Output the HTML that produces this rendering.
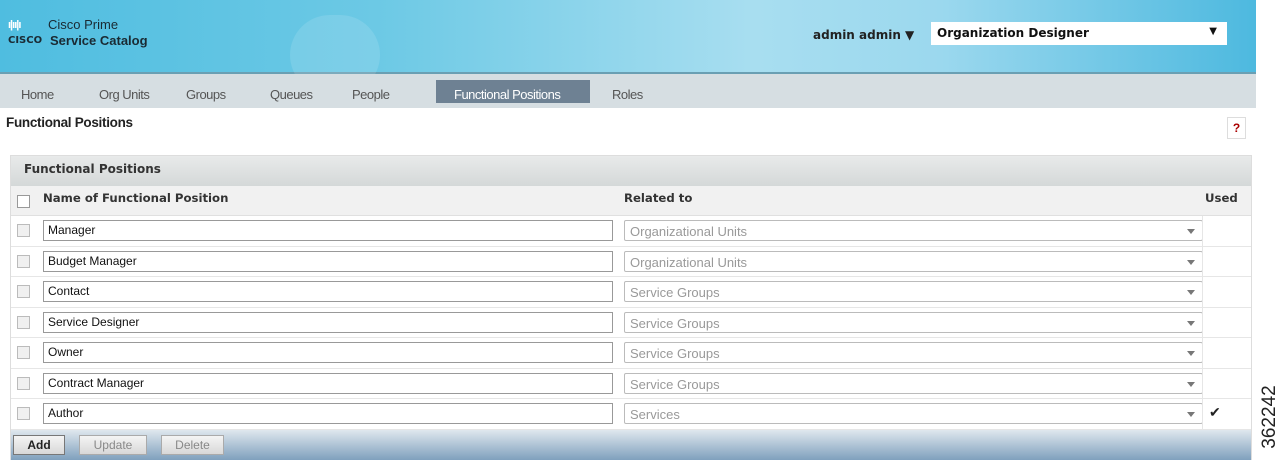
<!DOCTYPE html><html><head><style>
*{margin:0;padding:0;box-sizing:border-box}
body{width:1280px;height:460px;position:relative;background:#fff;font-family:"Liberation Sans",sans-serif;overflow:hidden}
.a{position:absolute}
.dj{font-family:"DejaVu Sans",sans-serif}
#hdr{left:0;top:0;width:1256px;height:74px;background:linear-gradient(90deg,#4fbde0 0%,#6cc9e5 30%,#a8def0 60%,#9bd8ee 75%,#4db9df 100%);border-bottom:2px solid #6a9fb3}
#nav{left:0;top:74px;width:1256px;height:34px;background:#d6dee2}
.tab{top:87px;font-size:13px;color:#555;letter-spacing:-0.5px}
.row{left:11px;width:1240px;background:#fff;border-bottom:1px solid #e6e6e6}
.cb{left:6px;top:8px;width:13px;height:13px;border:1px solid #bbb;background:#f0f0f0}
.in{left:32px;top:4px;width:570px;height:21px;border:1px solid #999;background:#fff;font-size:12px;padding:2px 4px;color:#111}
.sel{left:613px;top:4px;width:579px;height:21px;border:1px solid #bbb;border-radius:2px;background:#fff;font-size:13px;padding:3px 5px;color:#999}
.sel:after{content:"";position:absolute;right:7px;top:8px;border:4px solid transparent;border-top:5px solid #777}
.vl{left:1191px;top:0;width:1px;height:100%;background:#e6e6e6}
.btn{top:435px;height:20px;border:1px solid #aaa;background:linear-gradient(#f4f4f4,#d8d8d8);font-size:12px;color:#888;text-align:center;line-height:18px}
</style></head><body>
<div id="hdr" class="a"></div>
<div class="a" style="left:290px;top:15px;width:90px;height:80px;border-radius:45px;background:rgba(255,255,255,0.12)"></div>
<div class="a" style="left:8px;top:19px;font-size:11px;color:#fff;letter-spacing:-1px;font-weight:bold">ı|ıı|ı</div>
<div class="a" style="left:48px;top:17px;font-size:13px;color:#1a2a33">Cisco Prime</div>
<div class="a dj" style="left:8px;top:35px;font-size:10px;color:#1a2a33;font-weight:bold">CISCO</div>
<div class="a" style="left:50px;top:33px;font-size:13px;color:#1a2a33;font-weight:bold">Service Catalog</div>
<div class="a dj" style="left:813px;top:28px;font-size:12px;font-weight:bold;color:#222">admin admin ▼</div>
<div class="a dj" style="left:931px;top:22px;width:296px;height:23px;background:#fff;font-size:12px;font-weight:bold;color:#111;padding:4px 6px">Organization Designer<span style="position:absolute;right:10px;top:4px;font-size:10px">▼</span></div>
<div id="nav" class="a"></div>
<div class="a" style="left:436px;top:80px;width:154px;height:23px;background:#6e8193"></div>
<div class="a tab" style="left:21px">Home</div>
<div class="a tab" style="left:99px">Org Units</div>
<div class="a tab" style="left:186px">Groups</div>
<div class="a tab" style="left:270px">Queues</div>
<div class="a tab" style="left:352px">People</div>
<div class="a tab" style="left:454px;color:#fff">Functional Positions</div>
<div class="a tab" style="left:612px">Roles</div>
<div class="a" style="left:6px;top:115px;font-size:13.5px;font-weight:bold;color:#222;letter-spacing:-0.3px">Functional Positions</div>
<div class="a" style="left:1227px;top:117px;width:19px;height:22px;border:1px solid #ddd;color:#a00;font-size:12px;font-weight:bold;text-align:center;line-height:20px">?</div>
<div class="a" style="left:10px;top:155px;width:1242px;height:305px;border:1px solid #ddd;background:#f0f0f0"></div>
<div class="a" style="left:11px;top:156px;width:1240px;height:30px;background:linear-gradient(#e8eaea,#d4d8d8)"></div>
<div class="a dj" style="left:24px;top:162px;font-size:12px;font-weight:bold;color:#333">Functional Positions</div>
<div class="a" style="left:11px;top:186px;width:1240px;height:30px;background:#f1f1f1;border-bottom:1px solid #e0e0e0"></div>
<div class="a" style="left:17px;top:195px;width:13px;height:13px;border:1px solid #999;background:#fff"></div>
<div class="a dj" style="left:43px;top:191px;font-size:11.7px;font-weight:bold;color:#333">Name of Functional Position</div>
<div class="a dj" style="left:624px;top:191px;font-size:11.7px;font-weight:bold;color:#333">Related to</div>
<div class="a dj" style="left:1205px;top:191px;font-size:11.7px;font-weight:bold;color:#333">Used</div>

<div class="a row" style="top:216px;height:31px"><div class="a cb"></div><div class="a in">Manager</div><div class="a sel">Organizational Units</div><div class="a vl"></div></div>
<div class="a row" style="top:247px;height:30px"><div class="a cb"></div><div class="a in">Budget Manager</div><div class="a sel">Organizational Units</div><div class="a vl"></div></div>
<div class="a row" style="top:277px;height:31px"><div class="a cb"></div><div class="a in">Contact</div><div class="a sel">Service Groups</div><div class="a vl"></div></div>
<div class="a row" style="top:308px;height:30px"><div class="a cb"></div><div class="a in">Service Designer</div><div class="a sel">Service Groups</div><div class="a vl"></div></div>
<div class="a row" style="top:338px;height:31px"><div class="a cb"></div><div class="a in">Owner</div><div class="a sel">Service Groups</div><div class="a vl"></div></div>
<div class="a row" style="top:369px;height:30px"><div class="a cb"></div><div class="a in">Contract Manager</div><div class="a sel">Service Groups</div><div class="a vl"></div></div>
<div class="a row" style="top:399px;height:31px"><div class="a cb"></div><div class="a in">Author</div><div class="a sel">Services</div><div class="a vl"></div><div class="a" style="left:1198px;top:5px;font-size:14px;color:#222">✔</div></div>

<div class="a" style="left:11px;top:430px;width:1240px;height:30px;background:linear-gradient(#dfe7ee,#7fa0bd)"></div>
<div class="a btn" style="left:13px;width:52px;color:#222;font-weight:bold;border-color:#777">Add</div>
<div class="a btn" style="left:79px;width:68px">Update</div>
<div class="a btn" style="left:161px;width:63px">Delete</div>
<div class="a" style="left:1235px;top:406px;width:70px;font-size:19px;color:#222;transform:rotate(-90deg);transform-origin:center;text-align:center">362242</div>
</body></html>
